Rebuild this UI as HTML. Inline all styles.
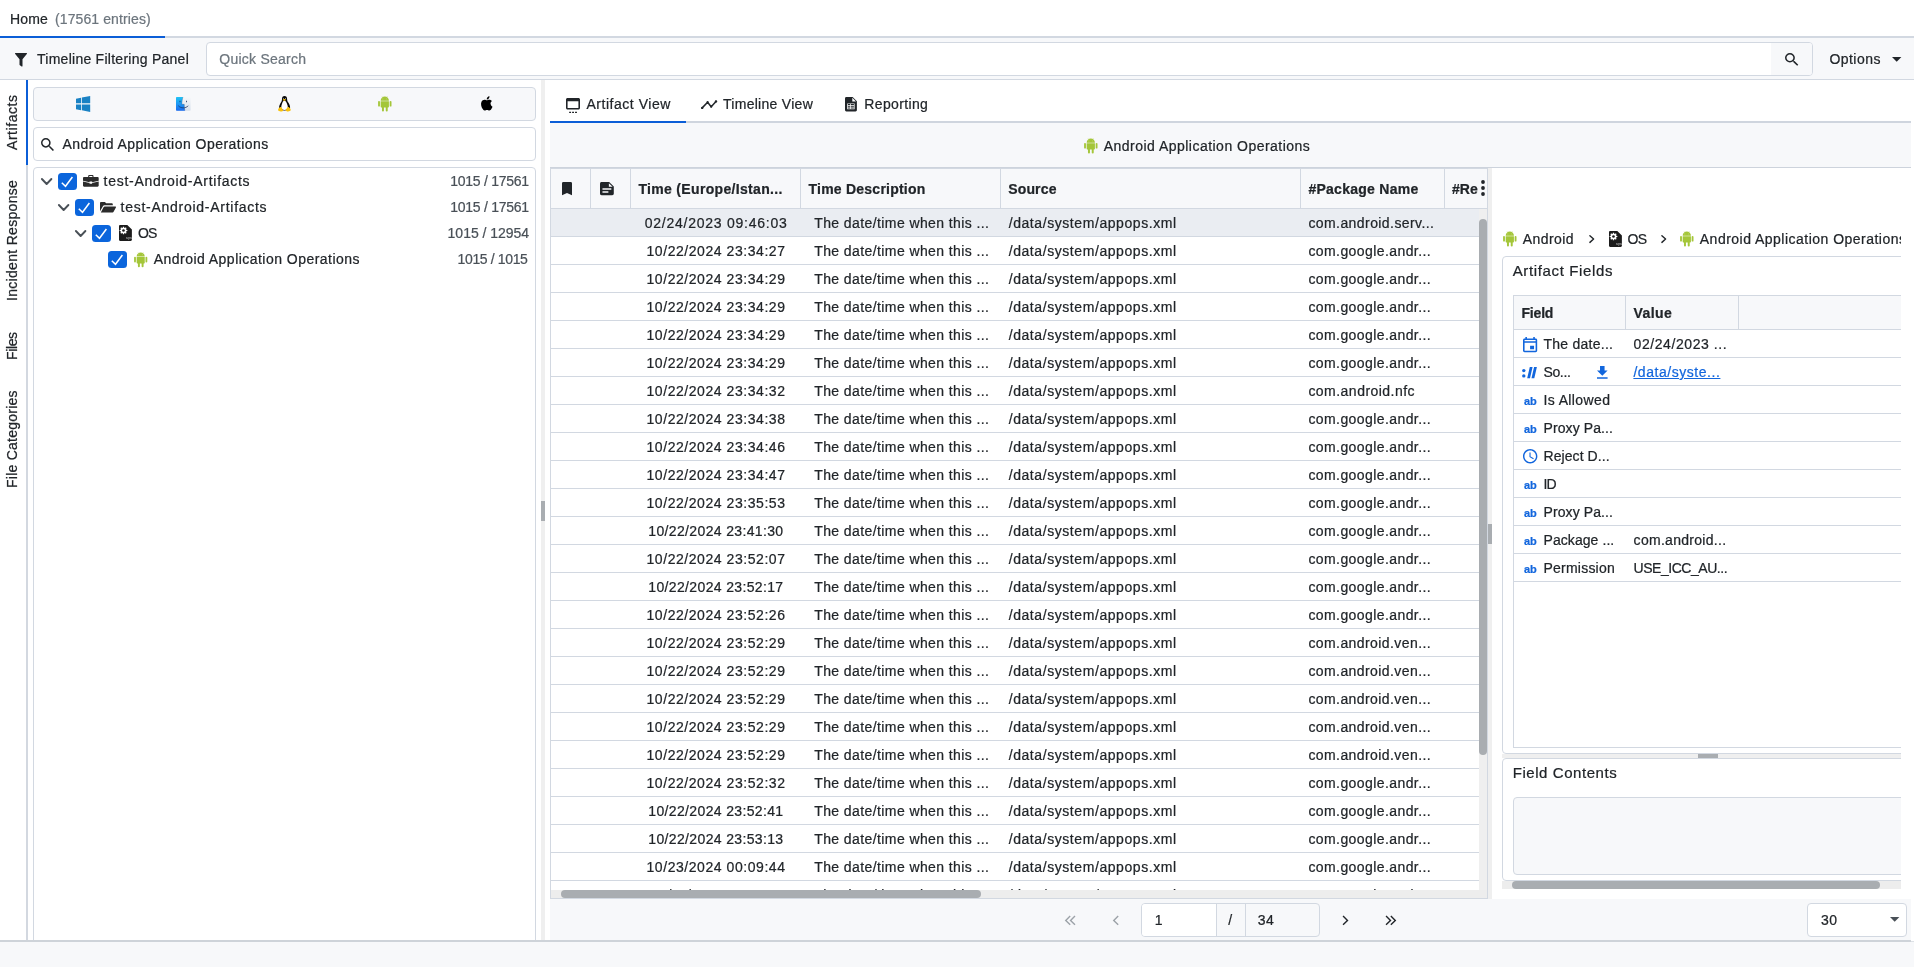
<!DOCTYPE html>
<html lang="en">
<head>
<meta charset="utf-8">
<title>Home</title>
<style>
*{box-sizing:border-box;margin:0;padding:0}
html,body{width:1914px;height:967px;overflow:hidden;background:#fff}
body{font-family:"Liberation Sans",sans-serif;font-size:14px;color:#212529;position:relative}
#app{position:absolute;left:0;top:0;width:1914px;height:967px;will-change:transform}
.abs{position:absolute}
.t{position:absolute;white-space:nowrap;-webkit-text-stroke:0.22px currentColor}
svg{display:block;overflow:visible}
.vt{position:absolute;transform-origin:0 0;transform:rotate(-90deg);white-space:nowrap;-webkit-text-stroke:0.22px currentColor}
a.t{color:#1266dd;text-decoration:underline}
</style>
</head>
<body>
<div id="app">
<!-- top tab bar -->
<div class="abs" style="left:0px;top:36px;width:1914px;height:2px;background:#d2d8e1"></div>
<div class="abs" style="left:0px;top:36px;width:165px;height:2px;background:#0b5ed7"></div>
<div class="t" style="left:10.00px;top:11px;font-size:14px;line-height:17px;letter-spacing:0.167px;">Home</div>
<div class="t" style="left:55.00px;top:11px;font-size:14px;line-height:17px;letter-spacing:0.107px;color:#6c757d;">(17561 entries)</div>
<!-- toolbar -->
<div class="abs" style="left:0px;top:38px;width:1914px;height:42px;background:#f7f8fa;border-bottom:1px solid #d2d8e1"></div>
<svg class="abs" style="left:15px;top:52.5px" width="12" height="14" viewBox="0 0 12 14" preserveAspectRatio="none" ><path fill="#212529" d="M0.600 0h10.800c.5 0 .8.600.4 1L7.500 6.300V13c0 .5-.5.700-.9.500L4.900 12.200c-.2-.2-.4-.4-.4-.7V6.300L0.200 1C-.2.600.1 0 .6 0z"/></svg>
<div class="t" style="left:37.00px;top:51px;font-size:14px;line-height:17px;letter-spacing:0.261px;">Timeline Filtering Panel</div>
<div class="abs" style="left:206px;top:42px;width:1607px;height:34px;border:1px solid #d2d8e1;border-radius:4px;background:#fff;overflow:hidden"><div class="abs" style="left:1564px;top:0px;width:42px;height:32px;background:#f7f8fa"></div></div>
<div class="t" style="left:219.30px;top:51px;font-size:14px;line-height:17px;letter-spacing:0.245px;color:#6c757d;">Quick Search</div>
<svg class="abs" style="left:1785px;top:52.8px" width="13.3" height="12.8" viewBox="3 3 17.500 17.500" preserveAspectRatio="none" ><path fill="#212529" d="M15.500 14h-.790l-.280-.270A6.471 6.471 0 0 0 16 9.500 6.500 6.500 0 1 0 9.500 16c1.610 0 3.090-.590 4.230-1.570l.270.280v.790l5 4.990L20.490 19l-4.990-5zm-6 0C7.010 14 5 11.990 5 9.500S7.010 5 9.500 5 14 7.010 14 9.500 11.990 14 9.500 14z"/></svg>
<div class="t" style="left:1829.40px;top:51px;font-size:14px;line-height:17px;letter-spacing:0.467px;">Options</div>
<svg class="abs" style="left:1891.7px;top:56.8px" width="9.4" height="4.8" viewBox="0 0 10 5" preserveAspectRatio="none" ><path fill="#212529" d="M0 0h10L5 5z"/></svg>
<!-- vertical tabs -->
<div class="abs" style="left:26px;top:80px;width:2px;height:860px;background:#d3d8e0"></div>
<div class="abs" style="left:26px;top:80px;width:2px;height:85px;background:#0b5ed7"></div>
<div class="vt" style="left:4.15px;top:150.30px;font-size:14px;line-height:17px;letter-spacing:0.550px">Artifacts</div>
<div class="vt" style="left:4.15px;top:301.30px;font-size:14px;line-height:17px;letter-spacing:0.306px">Incident Response</div>
<div class="vt" style="left:4.15px;top:359.70px;font-size:14px;line-height:17px;letter-spacing:-0.375px">Files</div>
<div class="vt" style="left:4.15px;top:487.70px;font-size:14px;line-height:17px;letter-spacing:0.243px">File Categories</div>
<!-- left panel -->
<div class="abs" style="left:33px;top:87px;width:503px;height:34px;border:1px solid #d2d8e1;border-radius:4px;background:#f7f8fa"></div>
<svg class="abs" style="left:75.9px;top:95.9px" width="14.2" height="15.9" viewBox="0 0 16 16" preserveAspectRatio="none" ><path fill="#1a82c4" d="M0 2.700L5.700 1.740V7.400H0zM6.600 1.590L16 0V7.400H6.600zM0 8.600H5.700V14.260L0 13.300zM6.600 8.600H16V16L6.600 14.410z"/></svg>
<svg class="abs" style="left:175.8px;top:97px" width="14.6" height="13.7" viewBox="0 0 14.500 13.600" preserveAspectRatio="none" ><defs><linearGradient id="fg" x1="0" y1="0" x2="0" y2="1"><stop offset="0" stop-color="#1fc3f5"/><stop offset="1" stop-color="#1a6cf0"/></linearGradient><linearGradient id="fw" x1="0" y1="0" x2="0" y2="1"><stop offset="0" stop-color="#f6f8fa"/><stop offset="1" stop-color="#d6e0ec"/></linearGradient></defs><rect x="0" y="0" width="14.500" height="13.600" rx="0.800" fill="url(#fw)"/><path d="M0 0.800a.8.800 0 0 1 .8-.8H6.900C6.300 1.800 5.900 4.500 5.800 7.300H8.200C8.200 9.500 8.400 11.700 8.800 13.600H.8a.8.800 0 0 1-.8-.8z" fill="url(#fg)"/><path d="M2.600 9C5 11.500 9.500 11.500 11.900 9" fill="none" stroke="#16315f" stroke-width="0.750" stroke-linecap="round"/><path d="M6.900 0.200C6.300 1.900 5.900 4.500 5.800 7.300H8.200C8.200 9.500 8.400 11.700 8.800 13.500" fill="none" stroke="#16315f" stroke-width="0.450" stroke-opacity="0.600"/><rect x="3.550" y="3.500" width="0.800" height="1.800" rx="0.400" fill="#16315f"/><rect x="10.100" y="3.500" width="0.800" height="1.800" rx="0.400" fill="#16315f"/></svg>
<svg class="abs" style="left:277.8px;top:95.9px" width="12.8" height="15.6" viewBox="0.100 0 12.800 15.700" preserveAspectRatio="none" ><path fill="#0a0a0a" d="M6.600 0C8.300 0 9.200 1.300 9.200 2.900C9.200 4.400 9.500 5.200 10.400 6.600C11.500 8.300 12.200 10 12.200 11.600C12.200 13.600 10.500 14.600 6.600 14.600C2.700 14.600 1.200 13.600 1.200 11.600C1.200 10 2 8.300 3 6.600C3.800 5.200 4.100 4.400 4.100 2.900C4.100 1.300 4.900 0 6.600 0z"/><path fill="#fff" d="M6.500 4.900C7.800 4.900 8.300 6 8.900 7.400C9.600 8.900 10 10.300 10 11.600C10 13.300 8.800 14 6.600 14C4.400 14 3.300 13.300 3.300 11.600C3.300 10.300 3.700 8.900 4.300 7.400C4.800 6 5.200 4.900 6.500 4.900z"/><path fill="#f8c10c" d="M0.200 14C0.100 13 1 12.400 1.700 11.600C2.300 10.900 3.400 11 3.900 12C4.400 13 5.500 13.900 5.300 14.700C5.100 15.600 3.800 15.700 2.800 15.500C1.700 15.300 0.300 15 0.200 14zM12.800 14C12.900 13 12 12.400 11.300 11.600C10.700 10.900 9.600 11 9.100 12C8.600 13 7.500 13.900 7.700 14.700C7.900 15.600 9.200 15.700 10.200 15.500C11.300 15.300 12.700 15 12.800 14z"/><ellipse cx="6.400" cy="3.900" rx="1.500" ry="0.850" fill="#f8c10c"/><circle cx="5.600" cy="2.500" r="0.450" fill="#fff"/><circle cx="7.500" cy="2.500" r="0.450" fill="#fff"/></svg>
<svg class="abs" style="left:378px;top:96.4px" width="13.6" height="15.6" viewBox="0 0 13.700 15.600" preserveAspectRatio="none" ><g fill="#a4c639"><path d="M2.700 4.650C2.700 2.300 4.500 0.500 6.850 0.500S11 2.300 11 4.650z"/><path d="M2.700 5.150H11V10.600C11 11.200 10.600 11.600 10 11.600H3.700C3.100 11.600 2.700 11.200 2.700 10.600z"/><rect x="0.100" y="4.900" width="1.850" height="5.700" rx="0.920"/><rect x="11.750" y="4.900" width="1.850" height="5.700" rx="0.920"/><rect x="4" y="10.500" width="2" height="5" rx="0.950"/><rect x="7.800" y="10.500" width="2" height="5" rx="0.950"/><path d="M3.900 0.100L4.900 1.500M9.800 0.100L8.800 1.500" stroke="#a4c639" stroke-width="0.350" stroke-opacity="0.700" fill="none"/></g><circle cx="4.900" cy="2.900" r="0.450" fill="#d5e6a3"/><circle cx="8.800" cy="2.900" r="0.450" fill="#d5e6a3"/></svg>
<svg class="abs" style="left:479.5px;top:96.1px" width="12.6" height="15.6" viewBox="0.5 1 12.5 15" preserveAspectRatio="none" ><path fill="#000" d="M10.9 8.5c0-1.7 1.4-2.5 1.5-2.6-.8-1.200-2.100-1.400-2.500-1.400-1.100-.1-2.100.6-2.600.6s-1.400-.6-2.300-.6c-1.200 0-2.300.7-2.900 1.800-1.200 2.100-.3 5.300.9 7 .6.800 1.300 1.800 2.200 1.700.9 0 1.200-.6 2.300-.6s1.300.6 2.300.6c.9 0 1.500-.8 2.100-1.700.7-1 .9-1.900 1-2 0 0-1.900-.7-1.900-2.800zM9.200 3.400c.5-.6.800-1.400.7-2.200-.7 0-1.500.5-2 1-.4.5-.8 1.300-.7 2.100.8.1 1.500-.4 2-.9z"/></svg>
<div class="abs" style="left:33px;top:127px;width:503px;height:34px;border:1px solid #d2d8e1;border-radius:4px;background:#fff"></div>
<svg class="abs" style="left:41.3px;top:137.6px" width="13" height="13" viewBox="3 3 17.500 17.500" preserveAspectRatio="none" ><path fill="#212529" d="M15.500 14h-.790l-.280-.270A6.471 6.471 0 0 0 16 9.500 6.500 6.500 0 1 0 9.500 16c1.610 0 3.090-.590 4.230-1.570l.270.280v.790l5 4.990L20.490 19l-4.990-5zm-6 0C7.010 14 5 11.990 5 9.500S7.010 5 9.500 5 14 7.010 14 9.500 11.990 14 9.500 14z"/></svg>
<div class="t" style="left:62.40px;top:136px;font-size:14px;line-height:17px;letter-spacing:0.469px;">Android Application Operations</div>
<div class="abs" style="left:33px;top:167px;width:503px;height:775px;border:1px solid #d2d8e1;border-radius:4px 4px 0 0;background:#fff"></div>
<svg class="abs" style="left:40.8px;top:177.7px" width="11.3" height="7.3" viewBox="0 0 11.300 7.300" preserveAspectRatio="none" ><path d="M0.900 1L5.650 6 10.400 1" fill="none" stroke="#495057" stroke-width="1.900" stroke-linecap="round" stroke-linejoin="round"/></svg>
<div class="abs" style="left:58.1px;top:173px;width:19px;height:17px;border-radius:3.5px;background:#0b65dc"><svg width="19" height="17" viewBox="0 0 19 17"><path d="M3.800 9.700L7.500 13.300 14.400 4" fill="none" stroke="#fff" stroke-width="1.500" stroke-linecap="butt"/></svg></div>
<svg class="abs" style="left:83.3px;top:175px" width="15.7" height="11.7" viewBox="0 0 16 12" preserveAspectRatio="none" ><path fill="#2b2b2b" d="M5.300 0.900C5.300.4 5.700 0 6.200 0h3.600c.5 0 .9.400.9.900V2h4.200c.6 0 1.100.5 1.100 1.100v2.700L9.300 7.400v-.6H6.700v.6L0 5.800V3.100C0 2.500.5 2 1.100 2h4.200zM6.400 2h3.200V1.100H6.400zM0 6.700l6.700 1.600v.6h2.600v-.6L16 6.700v4.200c0 .6-.5 1.100-1.100 1.100H1.100C.5 12 0 11.500 0 10.900z"/></svg>
<div class="t" style="left:103.60px;top:173px;font-size:14px;line-height:17px;letter-spacing:0.729px;">test-Android-Artifacts</div>
<div class="t" style="left:450.30px;top:173px;font-size:14px;line-height:17px;letter-spacing:-0.264px;color:#495057;">1015 / 17561</div>
<svg class="abs" style="left:57.699999999999996px;top:203.7px" width="11.3" height="7.3" viewBox="0 0 11.300 7.300" preserveAspectRatio="none" ><path d="M0.900 1L5.650 6 10.400 1" fill="none" stroke="#495057" stroke-width="1.900" stroke-linecap="round" stroke-linejoin="round"/></svg>
<div class="abs" style="left:75.0px;top:199px;width:19px;height:17px;border-radius:3.5px;background:#0b65dc"><svg width="19" height="17" viewBox="0 0 19 17"><path d="M3.800 9.700L7.500 13.300 14.400 4" fill="none" stroke="#fff" stroke-width="1.500" stroke-linecap="butt"/></svg></div>
<svg class="abs" style="left:99.9px;top:202px" width="16" height="10.4" viewBox="0 0 16 10.400" preserveAspectRatio="none" ><path fill="#2b2b2b" d="M0 1.100C0 .5.500 0 1.100 0h3.300c.3 0 .6.100.8.300l.9.900h5.600c.6 0 1.100.5 1.100 1.100v1H4.400c-.6 0-1.200.3-1.500.9L0 9.200zM0.800 10.400l2.900-5.300c.2-.4.600-.6 1-.6h10.600c.5 0 .9.600.6 1.100l-2.300 4.200c-.2.400-.6.600-1 .6z"/></svg>
<div class="t" style="left:120.60px;top:199px;font-size:14px;line-height:17px;letter-spacing:0.729px;">test-Android-Artifacts</div>
<div class="t" style="left:450.30px;top:199px;font-size:14px;line-height:17px;letter-spacing:-0.264px;color:#495057;">1015 / 17561</div>
<svg class="abs" style="left:74.6px;top:229.7px" width="11.3" height="7.3" viewBox="0 0 11.300 7.300" preserveAspectRatio="none" ><path d="M0.900 1L5.650 6 10.400 1" fill="none" stroke="#495057" stroke-width="1.900" stroke-linecap="round" stroke-linejoin="round"/></svg>
<div class="abs" style="left:91.9px;top:225px;width:19px;height:17px;border-radius:3.5px;background:#0b65dc"><svg width="19" height="17" viewBox="0 0 19 17"><path d="M3.800 9.700L7.500 13.300 14.400 4" fill="none" stroke="#fff" stroke-width="1.500" stroke-linecap="butt"/></svg></div>
<svg class="abs" style="left:119.1px;top:224.9px" width="12.9" height="16" viewBox="0 0 12.900 16" preserveAspectRatio="none" ><path fill="#1c1c1c" d="M1.200 0h7.100l4.600 4.400v10.400c0 .7-.5 1.200-1.200 1.200H1.200C.5 16 0 15.500 0 14.800V1.200C0 .5.500 0 1.200 0z"/><path fill="#fff" d="M7.31 4.78L8.35 4.89L8.35 6.11L7.31 6.22L7.00 6.98L7.66 7.79L6.79 8.66L5.98 8.00L5.22 8.31L5.11 9.35L3.89 9.35L3.78 8.31L3.02 8.00L2.21 8.66L1.34 7.79L2.00 6.98L1.69 6.22L0.65 6.11L0.65 4.89L1.69 4.78L2.00 4.02L1.34 3.21L2.21 2.34L3.02 3.00L3.78 2.69L3.89 1.65L5.11 1.65L5.22 2.69L5.98 3.00L6.79 2.34L7.66 3.21L7.00 4.02z"/><circle cx="4.500" cy="5.500" r="1.300" fill="#1c1c1c"/><text x="7.100" y="14.400" font-family="Liberation Sans, sans-serif" font-size="3.600" font-weight="bold" fill="#b5b5b5">sys</text></svg>
<div class="t" style="left:138.00px;top:225px;font-size:14px;line-height:17px;letter-spacing:-0.800px;">OS</div>
<div class="t" style="left:447.60px;top:225px;font-size:14px;line-height:17px;letter-spacing:-0.018px;color:#495057;">1015 / 12954</div>
<div class="abs" style="left:108.2px;top:251px;width:19px;height:17px;border-radius:3.5px;background:#0b65dc"><svg width="19" height="17" viewBox="0 0 19 17"><path d="M3.800 9.700L7.500 13.300 14.400 4" fill="none" stroke="#fff" stroke-width="1.500" stroke-linecap="butt"/></svg></div>
<svg class="abs" style="left:134.4px;top:251.6px" width="13.4" height="15.4" viewBox="0 0 13.700 15.600" preserveAspectRatio="none" ><g fill="#a4c639"><path d="M2.700 4.650C2.700 2.300 4.500 0.500 6.850 0.500S11 2.300 11 4.650z"/><path d="M2.700 5.150H11V10.600C11 11.200 10.600 11.600 10 11.600H3.700C3.100 11.600 2.700 11.200 2.700 10.600z"/><rect x="0.100" y="4.900" width="1.850" height="5.700" rx="0.920"/><rect x="11.750" y="4.900" width="1.850" height="5.700" rx="0.920"/><rect x="4" y="10.500" width="2" height="5" rx="0.950"/><rect x="7.800" y="10.500" width="2" height="5" rx="0.950"/><path d="M3.900 0.100L4.900 1.500M9.800 0.100L8.800 1.500" stroke="#a4c639" stroke-width="0.350" stroke-opacity="0.700" fill="none"/></g><circle cx="4.900" cy="2.900" r="0.450" fill="#d5e6a3"/><circle cx="8.800" cy="2.900" r="0.450" fill="#d5e6a3"/></svg>
<div class="t" style="left:153.70px;top:251px;font-size:14px;line-height:17px;letter-spacing:0.469px;">Android Application Operations</div>
<div class="t" style="left:457.60px;top:251px;font-size:14px;line-height:17px;letter-spacing:-0.370px;color:#495057;">1015 / 1015</div>
<div class="abs" style="left:541px;top:80px;width:4px;height:860px;background:#efefef"></div>
<div class="abs" style="left:541px;top:501px;width:4px;height:20px;background:#a9adb1"></div>
<!-- main tabs -->
<div class="abs" style="left:550px;top:121px;width:1361px;height:2px;background:#cfd5de"></div>
<div class="abs" style="left:550px;top:121px;width:136px;height:2px;background:#0b5ed7"></div>
<svg class="abs" style="left:566.3px;top:98px" width="14" height="15.4" viewBox="0 0 13.300 15" preserveAspectRatio="none" ><path fill="#212529" d="M1.500 0h10.300c.8 0 1.500.7 1.500 1.500v8.300c0 .8-.7 1.500-1.500 1.500H1.500C.7 11.300 0 10.600 0 9.800V1.500C0 .7.700 0 1.500 0zM1.500 3.200v6.600h10.300V3.200zM3 13.400h1.800v1.300H3zM5.800 13.400h1.800v1.300H5.800zM8.600 13.400h1.800v1.300H8.600z"/></svg>
<div class="t" style="left:586.40px;top:96px;font-size:14px;line-height:17px;letter-spacing:0.542px;">Artifact View</div>
<svg class="abs" style="left:700.9px;top:99.5px" width="16.2" height="9.2" viewBox="0 0 16.200 9.200" preserveAspectRatio="none" ><path d="M1.200 7.900L6.600 2.200 10.200 6.700 15 1.400" fill="none" stroke="#212529" stroke-width="1.500" stroke-linejoin="round" stroke-linecap="round"/><circle cx="1.200" cy="7.900" r="1.200" fill="#212529"/><circle cx="15" cy="1.400" r="1.200" fill="#212529"/><circle cx="6.600" cy="2.200" r="1.100" fill="#212529"/><circle cx="10.200" cy="6.700" r="1.100" fill="#212529"/></svg>
<div class="t" style="left:723.00px;top:96px;font-size:14px;line-height:17px;letter-spacing:0.283px;">Timeline View</div>
<svg class="abs" style="left:845.1px;top:96.9px" width="11.9" height="14.4" viewBox="0 0 11.900 14.400" preserveAspectRatio="none" ><path fill="#212529" d="M1.300 0h6.300l4.300 4.300v8.800c0 .7-.6 1.300-1.300 1.300H1.300C.6 14.400 0 13.800 0 13.100V1.300C0 .6.600 0 1.300 0z"/><path fill="#fff" d="M7.300 0.800v3.600h3.700zM2.200 6.400h7.400v5.800H2.200z"/><path fill="#212529" d="M2.900 7.100H5V8.100H2.900zM5.700 7.100H8.900V8.100H5.700zM2.900 8.800H5V9.800H2.900zM5.700 8.800H8.900V9.800H5.700zM2.900 10.500H5V11.500H2.900zM5.700 10.500H8.900V11.500H5.700z"/></svg>
<div class="t" style="left:864.30px;top:96px;font-size:14px;line-height:17px;letter-spacing:0.363px;">Reporting</div>
<div class="abs" style="left:550px;top:123px;width:1361px;height:45px;background:#f7f8fa;border-bottom:1px solid #cdd3dc"></div>
<svg class="abs" style="left:1084.2px;top:138.4px" width="13.6" height="15.6" viewBox="0 0 13.700 15.600" preserveAspectRatio="none" ><g fill="#a4c639"><path d="M2.700 4.650C2.700 2.300 4.500 0.500 6.850 0.500S11 2.300 11 4.650z"/><path d="M2.700 5.150H11V10.600C11 11.200 10.600 11.600 10 11.600H3.700C3.100 11.600 2.700 11.200 2.700 10.600z"/><rect x="0.100" y="4.900" width="1.850" height="5.700" rx="0.920"/><rect x="11.750" y="4.900" width="1.850" height="5.700" rx="0.920"/><rect x="4" y="10.500" width="2" height="5" rx="0.950"/><rect x="7.800" y="10.500" width="2" height="5" rx="0.950"/><path d="M3.900 0.100L4.900 1.500M9.800 0.100L8.800 1.500" stroke="#a4c639" stroke-width="0.350" stroke-opacity="0.700" fill="none"/></g><circle cx="4.900" cy="2.900" r="0.450" fill="#d5e6a3"/><circle cx="8.800" cy="2.900" r="0.450" fill="#d5e6a3"/></svg>
<div class="t" style="left:1103.70px;top:138px;font-size:14px;line-height:17px;letter-spacing:0.479px;">Android Application Operations</div>
<!-- grid -->
<div class="abs" style="left:550px;top:168px;width:938px;height:731px;background:#fff;overflow:hidden"><div class="abs" style="left:0px;top:0px;width:938px;height:41px;background:#f7f8fa;border-bottom:1px solid #d2d8e1"></div>
<div class="abs" style="left:40px;top:0px;width:1px;height:41px;background:#d2d8e1"></div>
<div class="abs" style="left:80px;top:0px;width:1px;height:41px;background:#d2d8e1"></div>
<div class="abs" style="left:250px;top:0px;width:1px;height:41px;background:#d2d8e1"></div>
<div class="abs" style="left:450px;top:0px;width:1px;height:41px;background:#d2d8e1"></div>
<div class="abs" style="left:750px;top:0px;width:1px;height:41px;background:#d2d8e1"></div>
<div class="abs" style="left:894px;top:0px;width:1px;height:41px;background:#d2d8e1"></div>
<svg class="abs" style="left:12px;top:14.199999999999989px" width="10" height="13.3" viewBox="0 0 10.800 13" preserveAspectRatio="none" ><path fill="#212529" d="M1.400 0h8c.8 0 1.400.6 1.400 1.400V13L5.400 10.700 0 13V1.400C0 .6.600 0 1.400 0z"/></svg>
<svg class="abs" style="left:50px;top:14.300000000000011px" width="13.8" height="13.2" viewBox="0 0 14 13" preserveAspectRatio="none" ><path fill="#212529" d="M1.600 0h7.700L14 4.400v7c0 .9-.7 1.600-1.600 1.600H1.600C.7 13 0 12.300 0 11.400V1.600C0 .7.700 0 1.600 0z"/><path fill="#f7f8fa" d="M9 1.200v3.500h3.800zM2.500 6.200h9v1.400h-9zM2.500 9.200h6v1.400h-6z"/></svg>
<div class="t" style="left:88.40px;top:13px;font-size:14px;line-height:17px;letter-spacing:0.330px;font-weight:bold;">Time (Europe/Istan...</div>
<div class="t" style="left:258.50px;top:13px;font-size:14px;line-height:17px;letter-spacing:0.233px;font-weight:bold;">Time Description</div>
<div class="t" style="left:458.20px;top:13px;font-size:14px;line-height:17px;letter-spacing:0.160px;font-weight:bold;">Source</div>
<div class="t" style="left:758.40px;top:13px;font-size:14px;line-height:17px;letter-spacing:0.267px;font-weight:bold;">#Package Name</div>
<div class="t" style="left:902.00px;top:13px;font-size:14px;line-height:17px;letter-spacing:0.000px;font-weight:bold;">#Re</div>
<svg class="abs" style="left:931px;top:11.699999999999989px" width="4" height="16" viewBox="0 0 4 16" preserveAspectRatio="none" ><circle cx="2" cy="2" r="1.900" fill="#212529"/><circle cx="2" cy="8" r="1.900" fill="#212529"/><circle cx="2" cy="14" r="1.900" fill="#212529"/></svg>
<div class="abs" style="left:0px;top:41px;width:929px;height:28px;background:#eaedf2;border-bottom:1px solid #d2d8e1"></div>
<div class="t" style="left:94.70px;top:47px;font-size:14px;line-height:17px;letter-spacing:0.756px;">02/24/2023 09:46:03</div>
<div class="t" style="left:264.20px;top:47px;font-size:14px;line-height:17px;letter-spacing:0.408px;">The date/time when this ...</div>
<div class="t" style="left:458.70px;top:47px;font-size:14px;line-height:17px;letter-spacing:0.573px;">/data/system/appops.xml</div>
<div class="t" style="left:758.40px;top:47px;font-size:14px;line-height:17px;letter-spacing:0.422px;">com.android.serv...</div>
<div class="abs" style="left:0px;top:69px;width:929px;height:28px;border-bottom:1px solid #d2d8e1"></div>
<div class="t" style="left:96.50px;top:75px;font-size:14px;line-height:17px;letter-spacing:0.556px;">10/22/2024 23:34:27</div>
<div class="t" style="left:264.20px;top:75px;font-size:14px;line-height:17px;letter-spacing:0.408px;">The date/time when this ...</div>
<div class="t" style="left:458.70px;top:75px;font-size:14px;line-height:17px;letter-spacing:0.573px;">/data/system/appops.xml</div>
<div class="t" style="left:758.40px;top:75px;font-size:14px;line-height:17px;letter-spacing:0.418px;">com.google.andr...</div>
<div class="abs" style="left:0px;top:97px;width:929px;height:28px;border-bottom:1px solid #d2d8e1"></div>
<div class="t" style="left:96.50px;top:103px;font-size:14px;line-height:17px;letter-spacing:0.556px;">10/22/2024 23:34:29</div>
<div class="t" style="left:264.20px;top:103px;font-size:14px;line-height:17px;letter-spacing:0.408px;">The date/time when this ...</div>
<div class="t" style="left:458.70px;top:103px;font-size:14px;line-height:17px;letter-spacing:0.573px;">/data/system/appops.xml</div>
<div class="t" style="left:758.40px;top:103px;font-size:14px;line-height:17px;letter-spacing:0.418px;">com.google.andr...</div>
<div class="abs" style="left:0px;top:125px;width:929px;height:28px;border-bottom:1px solid #d2d8e1"></div>
<div class="t" style="left:96.50px;top:131px;font-size:14px;line-height:17px;letter-spacing:0.556px;">10/22/2024 23:34:29</div>
<div class="t" style="left:264.20px;top:131px;font-size:14px;line-height:17px;letter-spacing:0.408px;">The date/time when this ...</div>
<div class="t" style="left:458.70px;top:131px;font-size:14px;line-height:17px;letter-spacing:0.573px;">/data/system/appops.xml</div>
<div class="t" style="left:758.40px;top:131px;font-size:14px;line-height:17px;letter-spacing:0.418px;">com.google.andr...</div>
<div class="abs" style="left:0px;top:153px;width:929px;height:28px;border-bottom:1px solid #d2d8e1"></div>
<div class="t" style="left:96.50px;top:159px;font-size:14px;line-height:17px;letter-spacing:0.556px;">10/22/2024 23:34:29</div>
<div class="t" style="left:264.20px;top:159px;font-size:14px;line-height:17px;letter-spacing:0.408px;">The date/time when this ...</div>
<div class="t" style="left:458.70px;top:159px;font-size:14px;line-height:17px;letter-spacing:0.573px;">/data/system/appops.xml</div>
<div class="t" style="left:758.40px;top:159px;font-size:14px;line-height:17px;letter-spacing:0.418px;">com.google.andr...</div>
<div class="abs" style="left:0px;top:181px;width:929px;height:28px;border-bottom:1px solid #d2d8e1"></div>
<div class="t" style="left:96.50px;top:187px;font-size:14px;line-height:17px;letter-spacing:0.556px;">10/22/2024 23:34:29</div>
<div class="t" style="left:264.20px;top:187px;font-size:14px;line-height:17px;letter-spacing:0.408px;">The date/time when this ...</div>
<div class="t" style="left:458.70px;top:187px;font-size:14px;line-height:17px;letter-spacing:0.573px;">/data/system/appops.xml</div>
<div class="t" style="left:758.40px;top:187px;font-size:14px;line-height:17px;letter-spacing:0.418px;">com.google.andr...</div>
<div class="abs" style="left:0px;top:209px;width:929px;height:28px;border-bottom:1px solid #d2d8e1"></div>
<div class="t" style="left:96.50px;top:215px;font-size:14px;line-height:17px;letter-spacing:0.556px;">10/22/2024 23:34:32</div>
<div class="t" style="left:264.20px;top:215px;font-size:14px;line-height:17px;letter-spacing:0.408px;">The date/time when this ...</div>
<div class="t" style="left:458.70px;top:215px;font-size:14px;line-height:17px;letter-spacing:0.573px;">/data/system/appops.xml</div>
<div class="t" style="left:758.40px;top:215px;font-size:14px;line-height:17px;letter-spacing:0.471px;">com.android.nfc</div>
<div class="abs" style="left:0px;top:237px;width:929px;height:28px;border-bottom:1px solid #d2d8e1"></div>
<div class="t" style="left:96.50px;top:243px;font-size:14px;line-height:17px;letter-spacing:0.556px;">10/22/2024 23:34:38</div>
<div class="t" style="left:264.20px;top:243px;font-size:14px;line-height:17px;letter-spacing:0.408px;">The date/time when this ...</div>
<div class="t" style="left:458.70px;top:243px;font-size:14px;line-height:17px;letter-spacing:0.573px;">/data/system/appops.xml</div>
<div class="t" style="left:758.40px;top:243px;font-size:14px;line-height:17px;letter-spacing:0.418px;">com.google.andr...</div>
<div class="abs" style="left:0px;top:265px;width:929px;height:28px;border-bottom:1px solid #d2d8e1"></div>
<div class="t" style="left:96.50px;top:271px;font-size:14px;line-height:17px;letter-spacing:0.556px;">10/22/2024 23:34:46</div>
<div class="t" style="left:264.20px;top:271px;font-size:14px;line-height:17px;letter-spacing:0.408px;">The date/time when this ...</div>
<div class="t" style="left:458.70px;top:271px;font-size:14px;line-height:17px;letter-spacing:0.573px;">/data/system/appops.xml</div>
<div class="t" style="left:758.40px;top:271px;font-size:14px;line-height:17px;letter-spacing:0.418px;">com.google.andr...</div>
<div class="abs" style="left:0px;top:293px;width:929px;height:28px;border-bottom:1px solid #d2d8e1"></div>
<div class="t" style="left:96.50px;top:299px;font-size:14px;line-height:17px;letter-spacing:0.556px;">10/22/2024 23:34:47</div>
<div class="t" style="left:264.20px;top:299px;font-size:14px;line-height:17px;letter-spacing:0.408px;">The date/time when this ...</div>
<div class="t" style="left:458.70px;top:299px;font-size:14px;line-height:17px;letter-spacing:0.573px;">/data/system/appops.xml</div>
<div class="t" style="left:758.40px;top:299px;font-size:14px;line-height:17px;letter-spacing:0.418px;">com.google.andr...</div>
<div class="abs" style="left:0px;top:321px;width:929px;height:28px;border-bottom:1px solid #d2d8e1"></div>
<div class="t" style="left:96.50px;top:327px;font-size:14px;line-height:17px;letter-spacing:0.556px;">10/22/2024 23:35:53</div>
<div class="t" style="left:264.20px;top:327px;font-size:14px;line-height:17px;letter-spacing:0.408px;">The date/time when this ...</div>
<div class="t" style="left:458.70px;top:327px;font-size:14px;line-height:17px;letter-spacing:0.573px;">/data/system/appops.xml</div>
<div class="t" style="left:758.40px;top:327px;font-size:14px;line-height:17px;letter-spacing:0.418px;">com.google.andr...</div>
<div class="abs" style="left:0px;top:349px;width:929px;height:28px;border-bottom:1px solid #d2d8e1"></div>
<div class="t" style="left:98.30px;top:355px;font-size:14px;line-height:17px;letter-spacing:0.356px;">10/22/2024 23:41:30</div>
<div class="t" style="left:264.20px;top:355px;font-size:14px;line-height:17px;letter-spacing:0.408px;">The date/time when this ...</div>
<div class="t" style="left:458.70px;top:355px;font-size:14px;line-height:17px;letter-spacing:0.573px;">/data/system/appops.xml</div>
<div class="t" style="left:758.40px;top:355px;font-size:14px;line-height:17px;letter-spacing:0.418px;">com.google.andr...</div>
<div class="abs" style="left:0px;top:377px;width:929px;height:28px;border-bottom:1px solid #d2d8e1"></div>
<div class="t" style="left:96.50px;top:383px;font-size:14px;line-height:17px;letter-spacing:0.556px;">10/22/2024 23:52:07</div>
<div class="t" style="left:264.20px;top:383px;font-size:14px;line-height:17px;letter-spacing:0.408px;">The date/time when this ...</div>
<div class="t" style="left:458.70px;top:383px;font-size:14px;line-height:17px;letter-spacing:0.573px;">/data/system/appops.xml</div>
<div class="t" style="left:758.40px;top:383px;font-size:14px;line-height:17px;letter-spacing:0.418px;">com.google.andr...</div>
<div class="abs" style="left:0px;top:405px;width:929px;height:28px;border-bottom:1px solid #d2d8e1"></div>
<div class="t" style="left:98.30px;top:411px;font-size:14px;line-height:17px;letter-spacing:0.356px;">10/22/2024 23:52:17</div>
<div class="t" style="left:264.20px;top:411px;font-size:14px;line-height:17px;letter-spacing:0.408px;">The date/time when this ...</div>
<div class="t" style="left:458.70px;top:411px;font-size:14px;line-height:17px;letter-spacing:0.573px;">/data/system/appops.xml</div>
<div class="t" style="left:758.40px;top:411px;font-size:14px;line-height:17px;letter-spacing:0.418px;">com.google.andr...</div>
<div class="abs" style="left:0px;top:433px;width:929px;height:28px;border-bottom:1px solid #d2d8e1"></div>
<div class="t" style="left:96.50px;top:439px;font-size:14px;line-height:17px;letter-spacing:0.556px;">10/22/2024 23:52:26</div>
<div class="t" style="left:264.20px;top:439px;font-size:14px;line-height:17px;letter-spacing:0.408px;">The date/time when this ...</div>
<div class="t" style="left:458.70px;top:439px;font-size:14px;line-height:17px;letter-spacing:0.573px;">/data/system/appops.xml</div>
<div class="t" style="left:758.40px;top:439px;font-size:14px;line-height:17px;letter-spacing:0.418px;">com.google.andr...</div>
<div class="abs" style="left:0px;top:461px;width:929px;height:28px;border-bottom:1px solid #d2d8e1"></div>
<div class="t" style="left:96.50px;top:467px;font-size:14px;line-height:17px;letter-spacing:0.556px;">10/22/2024 23:52:29</div>
<div class="t" style="left:264.20px;top:467px;font-size:14px;line-height:17px;letter-spacing:0.408px;">The date/time when this ...</div>
<div class="t" style="left:458.70px;top:467px;font-size:14px;line-height:17px;letter-spacing:0.573px;">/data/system/appops.xml</div>
<div class="t" style="left:758.40px;top:467px;font-size:14px;line-height:17px;letter-spacing:0.418px;">com.android.ven...</div>
<div class="abs" style="left:0px;top:489px;width:929px;height:28px;border-bottom:1px solid #d2d8e1"></div>
<div class="t" style="left:96.50px;top:495px;font-size:14px;line-height:17px;letter-spacing:0.556px;">10/22/2024 23:52:29</div>
<div class="t" style="left:264.20px;top:495px;font-size:14px;line-height:17px;letter-spacing:0.408px;">The date/time when this ...</div>
<div class="t" style="left:458.70px;top:495px;font-size:14px;line-height:17px;letter-spacing:0.573px;">/data/system/appops.xml</div>
<div class="t" style="left:758.40px;top:495px;font-size:14px;line-height:17px;letter-spacing:0.418px;">com.android.ven...</div>
<div class="abs" style="left:0px;top:517px;width:929px;height:28px;border-bottom:1px solid #d2d8e1"></div>
<div class="t" style="left:96.50px;top:523px;font-size:14px;line-height:17px;letter-spacing:0.556px;">10/22/2024 23:52:29</div>
<div class="t" style="left:264.20px;top:523px;font-size:14px;line-height:17px;letter-spacing:0.408px;">The date/time when this ...</div>
<div class="t" style="left:458.70px;top:523px;font-size:14px;line-height:17px;letter-spacing:0.573px;">/data/system/appops.xml</div>
<div class="t" style="left:758.40px;top:523px;font-size:14px;line-height:17px;letter-spacing:0.418px;">com.android.ven...</div>
<div class="abs" style="left:0px;top:545px;width:929px;height:28px;border-bottom:1px solid #d2d8e1"></div>
<div class="t" style="left:96.50px;top:551px;font-size:14px;line-height:17px;letter-spacing:0.556px;">10/22/2024 23:52:29</div>
<div class="t" style="left:264.20px;top:551px;font-size:14px;line-height:17px;letter-spacing:0.408px;">The date/time when this ...</div>
<div class="t" style="left:458.70px;top:551px;font-size:14px;line-height:17px;letter-spacing:0.573px;">/data/system/appops.xml</div>
<div class="t" style="left:758.40px;top:551px;font-size:14px;line-height:17px;letter-spacing:0.418px;">com.android.ven...</div>
<div class="abs" style="left:0px;top:573px;width:929px;height:28px;border-bottom:1px solid #d2d8e1"></div>
<div class="t" style="left:96.50px;top:579px;font-size:14px;line-height:17px;letter-spacing:0.556px;">10/22/2024 23:52:29</div>
<div class="t" style="left:264.20px;top:579px;font-size:14px;line-height:17px;letter-spacing:0.408px;">The date/time when this ...</div>
<div class="t" style="left:458.70px;top:579px;font-size:14px;line-height:17px;letter-spacing:0.573px;">/data/system/appops.xml</div>
<div class="t" style="left:758.40px;top:579px;font-size:14px;line-height:17px;letter-spacing:0.418px;">com.android.ven...</div>
<div class="abs" style="left:0px;top:601px;width:929px;height:28px;border-bottom:1px solid #d2d8e1"></div>
<div class="t" style="left:96.50px;top:607px;font-size:14px;line-height:17px;letter-spacing:0.556px;">10/22/2024 23:52:32</div>
<div class="t" style="left:264.20px;top:607px;font-size:14px;line-height:17px;letter-spacing:0.408px;">The date/time when this ...</div>
<div class="t" style="left:458.70px;top:607px;font-size:14px;line-height:17px;letter-spacing:0.573px;">/data/system/appops.xml</div>
<div class="t" style="left:758.40px;top:607px;font-size:14px;line-height:17px;letter-spacing:0.418px;">com.google.andr...</div>
<div class="abs" style="left:0px;top:629px;width:929px;height:28px;border-bottom:1px solid #d2d8e1"></div>
<div class="t" style="left:98.30px;top:635px;font-size:14px;line-height:17px;letter-spacing:0.356px;">10/22/2024 23:52:41</div>
<div class="t" style="left:264.20px;top:635px;font-size:14px;line-height:17px;letter-spacing:0.408px;">The date/time when this ...</div>
<div class="t" style="left:458.70px;top:635px;font-size:14px;line-height:17px;letter-spacing:0.573px;">/data/system/appops.xml</div>
<div class="t" style="left:758.40px;top:635px;font-size:14px;line-height:17px;letter-spacing:0.418px;">com.google.andr...</div>
<div class="abs" style="left:0px;top:657px;width:929px;height:28px;border-bottom:1px solid #d2d8e1"></div>
<div class="t" style="left:98.30px;top:663px;font-size:14px;line-height:17px;letter-spacing:0.356px;">10/22/2024 23:53:13</div>
<div class="t" style="left:264.20px;top:663px;font-size:14px;line-height:17px;letter-spacing:0.408px;">The date/time when this ...</div>
<div class="t" style="left:458.70px;top:663px;font-size:14px;line-height:17px;letter-spacing:0.573px;">/data/system/appops.xml</div>
<div class="t" style="left:758.40px;top:663px;font-size:14px;line-height:17px;letter-spacing:0.418px;">com.google.andr...</div>
<div class="abs" style="left:0px;top:685px;width:929px;height:28px;border-bottom:1px solid #d2d8e1"></div>
<div class="t" style="left:96.50px;top:691px;font-size:14px;line-height:17px;letter-spacing:0.556px;">10/23/2024 00:09:44</div>
<div class="t" style="left:264.20px;top:691px;font-size:14px;line-height:17px;letter-spacing:0.408px;">The date/time when this ...</div>
<div class="t" style="left:458.70px;top:691px;font-size:14px;line-height:17px;letter-spacing:0.573px;">/data/system/appops.xml</div>
<div class="t" style="left:758.40px;top:691px;font-size:14px;line-height:17px;letter-spacing:0.418px;">com.google.andr...</div>
<div class="abs" style="left:0px;top:713px;width:929px;height:28px;border-bottom:1px solid #d2d8e1"></div>
<div class="t" style="left:101.90px;top:719px;font-size:14px;line-height:17px;letter-spacing:0.011px;">10/23/2024 00:10:11</div>
<div class="t" style="left:264.20px;top:719px;font-size:14px;line-height:17px;letter-spacing:0.408px;">The date/time when this ...</div>
<div class="t" style="left:458.70px;top:719px;font-size:14px;line-height:17px;letter-spacing:0.573px;">/data/system/appops.xml</div>
<div class="t" style="left:758.40px;top:719px;font-size:14px;line-height:17px;letter-spacing:0.418px;">com.google.andr...</div>
<div class="abs" style="left:929px;top:41px;width:8px;height:681px;background:#efefef"></div>
<div class="abs" style="left:929px;top:51px;width:8px;height:536px;background:#a9adb1;border-radius:4px"></div>
<div class="abs" style="left:1px;top:722px;width:936px;height:8px;background:#ededed"></div>
<div class="abs" style="left:11px;top:722.3px;width:420px;height:7.4px;background:#a9adb1;border-radius:4px"></div>
<div class="abs" style="left:0px;top:0px;width:938px;height:731px;border:1px solid #d2d8e1"></div></div>
<div class="abs" style="left:1488px;top:168px;width:4px;height:731px;background:#efefef"></div>
<div class="abs" style="left:1488px;top:524px;width:4px;height:20px;background:#a9adb1"></div>
<!-- details -->
<div class="abs" style="left:1492px;top:168px;width:409px;height:731px;background:#fff;overflow:hidden"><svg class="abs" style="left:11.099999999999909px;top:63.400000000000006px" width="13.6" height="15.6" viewBox="0 0 13.700 15.600" preserveAspectRatio="none" ><g fill="#a4c639"><path d="M2.700 4.650C2.700 2.300 4.500 0.500 6.850 0.500S11 2.300 11 4.650z"/><path d="M2.700 5.150H11V10.600C11 11.200 10.600 11.600 10 11.600H3.700C3.100 11.600 2.700 11.200 2.700 10.600z"/><rect x="0.100" y="4.900" width="1.850" height="5.700" rx="0.920"/><rect x="11.750" y="4.900" width="1.850" height="5.700" rx="0.920"/><rect x="4" y="10.500" width="2" height="5" rx="0.950"/><rect x="7.800" y="10.500" width="2" height="5" rx="0.950"/><path d="M3.900 0.100L4.900 1.500M9.800 0.100L8.800 1.500" stroke="#a4c639" stroke-width="0.350" stroke-opacity="0.700" fill="none"/></g><circle cx="4.900" cy="2.900" r="0.450" fill="#d5e6a3"/><circle cx="8.800" cy="2.900" r="0.450" fill="#d5e6a3"/></svg>
<div class="t" style="left:30.70px;top:63px;font-size:14px;line-height:17px;letter-spacing:0.450px;">Android</div>
<svg class="abs" style="left:96.59999999999991px;top:66.9px" width="5.6" height="8.2" viewBox="0 0 5.600 8.200" preserveAspectRatio="none" ><path d="M0.900 0.800L4.600 4.100 0.900 7.400" fill="none" stroke="#212529" stroke-width="1.400" stroke-linecap="round" stroke-linejoin="round"/></svg>
<svg class="abs" style="left:116.79999999999995px;top:63px" width="12.9" height="16" viewBox="0 0 12.900 16" preserveAspectRatio="none" ><path fill="#1c1c1c" d="M1.200 0h7.100l4.600 4.400v10.400c0 .7-.5 1.200-1.200 1.200H1.200C.5 16 0 15.500 0 14.800V1.200C0 .5.500 0 1.200 0z"/><path fill="#fff" d="M7.31 4.78L8.35 4.89L8.35 6.11L7.31 6.22L7.00 6.98L7.66 7.79L6.79 8.66L5.98 8.00L5.22 8.31L5.11 9.35L3.89 9.35L3.78 8.31L3.02 8.00L2.21 8.66L1.34 7.79L2.00 6.98L1.69 6.22L0.65 6.11L0.65 4.89L1.69 4.78L2.00 4.02L1.34 3.21L2.21 2.34L3.02 3.00L3.78 2.69L3.89 1.65L5.11 1.65L5.22 2.69L5.98 3.00L6.79 2.34L7.66 3.21L7.00 4.02z"/><circle cx="4.500" cy="5.500" r="1.300" fill="#1c1c1c"/><text x="7.100" y="14.400" font-family="Liberation Sans, sans-serif" font-size="3.600" font-weight="bold" fill="#b5b5b5">sys</text></svg>
<div class="t" style="left:135.60px;top:63px;font-size:14px;line-height:17px;letter-spacing:-0.800px;">OS</div>
<svg class="abs" style="left:168.5px;top:66.9px" width="5.6" height="8.2" viewBox="0 0 5.600 8.200" preserveAspectRatio="none" ><path d="M0.900 0.800L4.600 4.100 0.900 7.400" fill="none" stroke="#212529" stroke-width="1.400" stroke-linecap="round" stroke-linejoin="round"/></svg>
<svg class="abs" style="left:188.20000000000005px;top:63.400000000000006px" width="13.6" height="15.6" viewBox="0 0 13.700 15.600" preserveAspectRatio="none" ><g fill="#a4c639"><path d="M2.700 4.650C2.700 2.300 4.500 0.500 6.850 0.500S11 2.300 11 4.650z"/><path d="M2.700 5.150H11V10.600C11 11.200 10.600 11.600 10 11.600H3.700C3.100 11.600 2.700 11.200 2.700 10.600z"/><rect x="0.100" y="4.900" width="1.850" height="5.700" rx="0.920"/><rect x="11.750" y="4.900" width="1.850" height="5.700" rx="0.920"/><rect x="4" y="10.500" width="2" height="5" rx="0.950"/><rect x="7.800" y="10.500" width="2" height="5" rx="0.950"/><path d="M3.900 0.100L4.900 1.500M9.800 0.100L8.800 1.500" stroke="#a4c639" stroke-width="0.350" stroke-opacity="0.700" fill="none"/></g><circle cx="4.900" cy="2.900" r="0.450" fill="#d5e6a3"/><circle cx="8.800" cy="2.900" r="0.450" fill="#d5e6a3"/></svg>
<div class="t" style="left:207.80px;top:63px;font-size:14px;line-height:17px;letter-spacing:0.479px;">Android Application Operations</div>
<div class="abs" style="left:10px;top:88px;width:420px;height:498px;border:1px solid #d2d8e1;border-radius:4px;background:#fff"></div>
<div class="t" style="left:20.70px;top:94px;font-size:15px;line-height:18px;letter-spacing:0.636px;">Artifact Fields</div>
<div class="abs" style="left:21px;top:127px;width:420px;height:453px;border:1px solid #d2d8e1;background:#fff"></div>
<div class="abs" style="left:22px;top:128px;width:420px;height:34px;background:#f7f8fa;border-bottom:1px solid #d2d8e1"></div>
<div class="abs" style="left:133px;top:128px;width:1px;height:34px;background:#d2d8e1"></div>
<div class="abs" style="left:246px;top:128px;width:1px;height:34px;background:#d2d8e1"></div>
<div class="t" style="left:29.50px;top:137px;font-size:14px;line-height:17px;letter-spacing:-0.200px;font-weight:bold;">Field</div>
<div class="t" style="left:141.60px;top:137px;font-size:14px;line-height:17px;letter-spacing:0.425px;font-weight:bold;">Value</div>
<div class="abs" style="left:22px;top:162px;width:420px;height:28px;border-bottom:1px solid #d2d8e1"></div>
<svg class="abs" style="left:30.90000000000009px;top:168.60000000000002px" width="14.2" height="15.2" viewBox="3 1 18 21" preserveAspectRatio="none" ><path fill="#1266dd" d="M19 3h-1V1h-2v2H8V1H6v2H5c-1.110 0-1.990.9-1.990 2L3 20a2 2 0 0 0 2 2h14c1.100 0 2-.9 2-2V5c0-1.100-.9-2-2-2zm0 17H5V9h14v11zM5 7V5h14v2H5zm7 6h5v5h-5z"/></svg>
<div class="t" style="left:51.50px;top:168px;font-size:14px;line-height:17px;letter-spacing:0.250px;">The date...</div>
<div class="t" style="left:141.60px;top:168px;font-size:14px;line-height:17px;letter-spacing:0.569px;">02/24/2023 ...</div>
<div class="abs" style="left:22px;top:190px;width:420px;height:28px;border-bottom:1px solid #d2d8e1"></div>
<svg class="abs" style="left:30.200000000000045px;top:198.8px" width="14.9" height="11.2" viewBox="0 0 14.900 11.200" preserveAspectRatio="none" ><g fill="#1266dd"><circle cx="1.800" cy="3.600" r="1.700"/><circle cx="1.800" cy="8.900" r="1.700"/><path d="M5.200 11.200H8L10.600 0H7.800zM9.500 11.200H12.300L14.900 0H12.100z"/></g></svg>
<svg class="abs" style="left:104.79999999999995px;top:197.60000000000002px" width="10.6" height="12.8" viewBox="5 3 14 17" preserveAspectRatio="none" ><path fill="#1266dd" d="M19 9h-4V3H9v6H5l7 7 7-7zM5 18v2h14v-2H5z"/></svg>
<div class="t" style="left:51.50px;top:196px;font-size:14px;line-height:17px;letter-spacing:-0.375px;">So...</div>
<a class="t" style="left:141.40px;top:196px;font-size:14px;line-height:17px;letter-spacing:0.546px;">/data/syste...</a>
<div class="abs" style="left:22px;top:218px;width:420px;height:28px;border-bottom:1px solid #d2d8e1"></div>
<div class="t" style="left:31.90px;top:227px;font-size:11px;line-height:13px;letter-spacing:0.000px;font-weight:bold;color:#1266dd;">ab</div>
<div class="t" style="left:51.50px;top:224px;font-size:14px;line-height:17px;letter-spacing:0.378px;">Is Allowed</div>
<div class="abs" style="left:22px;top:246px;width:420px;height:28px;border-bottom:1px solid #d2d8e1"></div>
<div class="t" style="left:31.90px;top:255px;font-size:11px;line-height:13px;letter-spacing:0.000px;font-weight:bold;color:#1266dd;">ab</div>
<div class="t" style="left:51.50px;top:252px;font-size:14px;line-height:17px;letter-spacing:0.090px;">Proxy Pa...</div>
<div class="abs" style="left:22px;top:274px;width:420px;height:28px;border-bottom:1px solid #d2d8e1"></div>
<svg class="abs" style="left:30.5px;top:281px" width="14.4" height="14.4" viewBox="2 2 20 20" preserveAspectRatio="none" ><path fill="#1266dd" d="M11.990 2C6.470 2 2 6.480 2 12s4.470 10 9.990 10C17.520 22 22 17.520 22 12S17.520 2 11.990 2zM12 20c-4.420 0-8-3.580-8-8s3.580-8 8-8 8 3.580 8 8-3.580 8-8 8zm.5-13H11v6l5.250 3.150.75-1.230-4.500-2.670z"/></svg>
<div class="t" style="left:51.50px;top:280px;font-size:14px;line-height:17px;letter-spacing:0.070px;">Reject D...</div>
<div class="abs" style="left:22px;top:302px;width:420px;height:28px;border-bottom:1px solid #d2d8e1"></div>
<div class="t" style="left:31.90px;top:311px;font-size:11px;line-height:13px;letter-spacing:0.000px;font-weight:bold;color:#1266dd;">ab</div>
<div class="t" style="left:51.50px;top:308px;font-size:14px;line-height:17px;letter-spacing:-0.800px;">ID</div>
<div class="abs" style="left:22px;top:330px;width:420px;height:28px;border-bottom:1px solid #d2d8e1"></div>
<div class="t" style="left:31.90px;top:339px;font-size:11px;line-height:13px;letter-spacing:0.000px;font-weight:bold;color:#1266dd;">ab</div>
<div class="t" style="left:51.50px;top:336px;font-size:14px;line-height:17px;letter-spacing:0.090px;">Proxy Pa...</div>
<div class="abs" style="left:22px;top:358px;width:420px;height:28px;border-bottom:1px solid #d2d8e1"></div>
<div class="t" style="left:31.90px;top:367px;font-size:11px;line-height:13px;letter-spacing:0.000px;font-weight:bold;color:#1266dd;">ab</div>
<div class="t" style="left:51.50px;top:364px;font-size:14px;line-height:17px;letter-spacing:0.070px;">Package ...</div>
<div class="t" style="left:141.60px;top:364px;font-size:14px;line-height:17px;letter-spacing:0.292px;">com.android...</div>
<div class="abs" style="left:22px;top:386px;width:420px;height:28px;border-bottom:1px solid #d2d8e1"></div>
<div class="t" style="left:31.90px;top:395px;font-size:11px;line-height:13px;letter-spacing:0.000px;font-weight:bold;color:#1266dd;">ab</div>
<div class="t" style="left:51.50px;top:392px;font-size:14px;line-height:17px;letter-spacing:0.222px;">Permission</div>
<div class="t" style="left:141.60px;top:392px;font-size:14px;line-height:17px;letter-spacing:-0.467px;">USE_ICC_AU...</div>
<div class="abs" style="left:10px;top:586px;width:420px;height:4px;background:#efefef"></div>
<div class="abs" style="left:206px;top:586px;width:20px;height:4px;background:#a9adb1"></div>
<div class="abs" style="left:10px;top:590px;width:420px;height:123px;border:1px solid #d2d8e1;border-radius:4px;background:#fff"></div>
<div class="t" style="left:20.70px;top:596px;font-size:15px;line-height:18px;letter-spacing:0.562px;">Field Contents</div>
<div class="abs" style="left:21px;top:629px;width:420px;height:78px;border:1px solid #d2d8e1;border-radius:4px;background:#f7f8fa"></div>
<div class="abs" style="left:10px;top:713px;width:400px;height:8px;background:#ededed"></div>
<div class="abs" style="left:19.7px;top:713.2px;width:368px;height:7.6px;background:#a9adb1;border-radius:4px"></div></div>
<!-- pager -->
<div class="abs" style="left:550px;top:899px;width:1361px;height:41px;background:#f7f8fa"></div>
<svg class="abs" style="left:1064.9px;top:915.9px" width="10.1" height="8.8" viewBox="0 0 10.1 8.800" preserveAspectRatio="none" ><path d="M4.70 0.550L0.75 4.400 4.70 8.250 M9.50 0.550L5.55 4.400 9.50 8.250" fill="none" stroke="#9ca2a8" stroke-width="1.400" stroke-linecap="square" stroke-linejoin="miter"/></svg>
<svg class="abs" style="left:1113.1px;top:915.9px" width="5.3" height="8.8" viewBox="0 0 5.3 8.800" preserveAspectRatio="none" ><path d="M4.70 0.550L0.75 4.400 4.70 8.250" fill="none" stroke="#9ca2a8" stroke-width="1.400" stroke-linecap="square" stroke-linejoin="miter"/></svg>
<div class="abs" style="left:1141px;top:903px;width:179px;height:34px;border:1px solid #d2d8e1;border-radius:4px;background:#f7f8fa;overflow:hidden"><div class="abs" style="left:0px;top:0px;width:74px;height:32px;background:#fff"></div><div class="abs" style="left:74px;top:0px;width:1px;height:32px;background:#d2d8e1"></div><div class="abs" style="left:103px;top:0px;width:1px;height:32px;background:#d2d8e1"></div></div>
<div class="t" style="left:1154.70px;top:912px;font-size:14px;line-height:17px;letter-spacing:0.000px;">1</div>
<div class="t" style="left:1228.20px;top:912px;font-size:14px;line-height:17px;letter-spacing:0.000px;">/</div>
<div class="t" style="left:1257.80px;top:912px;font-size:14px;line-height:17px;letter-spacing:0.500px;">34</div>
<svg class="abs" style="left:1342.5px;top:915.9px" width="5.3" height="8.8" viewBox="0 0 5.3 8.800" preserveAspectRatio="none" ><path d="M0.55 0.550L4.50 4.400 0.55 8.250" fill="none" stroke="#212529" stroke-width="1.400" stroke-linecap="square" stroke-linejoin="miter"/></svg>
<svg class="abs" style="left:1386.1px;top:915.9px" width="10.1" height="8.8" viewBox="0 0 10.1 8.800" preserveAspectRatio="none" ><path d="M0.55 0.550L4.50 4.400 0.55 8.250 M5.35 0.550L9.30 4.400 5.35 8.250" fill="none" stroke="#212529" stroke-width="1.400" stroke-linecap="square" stroke-linejoin="miter"/></svg>
<div class="abs" style="left:1807px;top:903px;width:100px;height:34px;border:1px solid #d2d8e1;border-radius:4px;background:#fff"></div>
<div class="t" style="left:1821.00px;top:912px;font-size:14px;line-height:17px;letter-spacing:0.500px;">30</div>
<svg class="abs" style="left:1890px;top:917.2px" width="9.4" height="4.7" viewBox="0 0 10 5" preserveAspectRatio="none" ><path fill="#495057" d="M0 0h10L5 5z"/></svg>
<!-- footer -->
<div class="abs" style="left:0px;top:940px;width:1914px;height:27px;background:#f7f8fa"></div>
<div class="abs" style="left:1911px;top:940px;width:3px;height:1px;background:#fff"></div>
<div class="abs" style="left:1911px;top:941px;width:3px;height:1px;background:#dde1e6"></div>
<div class="abs" style="left:0px;top:940px;width:1911px;height:2px;background:#ced3d9"></div>
</div>
</body>
</html>
